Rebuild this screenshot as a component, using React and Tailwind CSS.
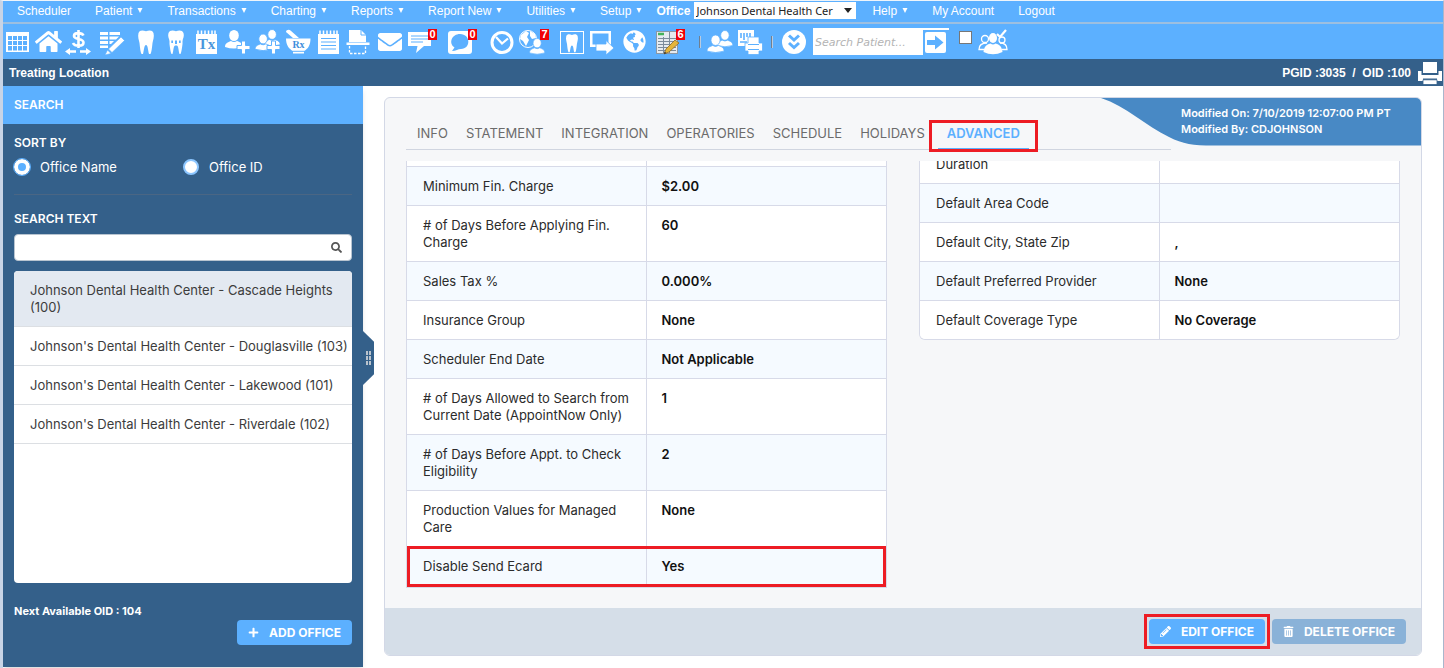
import { useState } from "react";
import { FaPencilAlt, FaPlus, FaTrashAlt, FaSearch, FaEnvelope, FaHome, FaGlobeAmericas } from "react-icons/fa";

const MENU = [
  { label: "Scheduler" },
  { label: "Patient", arrow: true },
  { label: "Transactions", arrow: true },
  { label: "Charting", arrow: true },
  { label: "Reports", arrow: true },
  { label: "Report New", arrow: true },
  { label: "Utilities", arrow: true },
  { label: "Setup", arrow: true },
];

const MENU_RIGHT = [
  { label: "Help", arrow: true },
  { label: "My Account" },
  { label: "Logout" },
];

const OFFICES = [
  { id: 100, name: "Johnson Dental Health Center - Cascade Heights" },
  { id: 103, name: "Johnson's Dental Health Center - Douglasville" },
  { id: 101, name: "Johnson's Dental Health Center - Lakewood" },
  { id: 102, name: "Johnson's Dental Health Center - Riverdale" },
];

const TABS = ["INFO", "STATEMENT", "INTEGRATION", "OPERATORIES", "SCHEDULE", "HOLIDAYS", "ADVANCED"];

const FINANCE_ROWS = [
  { label: "Minimum Fin. Charge", value: "$2.00" },
  { label: "# of Days Before Applying Fin. Charge", value: "60" },
  { label: "Sales Tax %", value: "0.000%" },
  { label: "Insurance Group", value: "None" },
  { label: "Scheduler End Date", value: "Not Applicable" },
  { label: "# of Days Allowed to Search from Current Date (AppointNow Only)", value: "1" },
  { label: "# of Days Before Appt. to Check Eligibility", value: "2" },
  { label: "Production Values for Managed Care", value: "None" },
  { label: "Disable Send Ecard", value: "Yes", marked: true },
];

const DEFAULT_ROWS = [
  { label: "Duration", value: "" },
  { label: "Default Area Code", value: "" },
  { label: "Default City, State Zip", value: "," },
  { label: "Default Preferred Provider", value: "None" },
  { label: "Default Coverage Type", value: "No Coverage" },
];

/* ---------- toolbar icons, all on a 26x26 grid ---------- */

const Svg = ({ children }) => (
  <svg viewBox="0 0 26 26" className="size-[26px]" fill="#fff" aria-hidden="true">
    {children}
  </svg>
);

const TOOTH = "M1 3C2 0 5 0 8.500 1.200C12 0 15 0 16 3C17 7 15.500 10 15 13C14.500 18 14 22 13 24H11.500C10.500 21 10.500 15 8.500 15C6.500 15 6.500 21 5.500 24H4C3 22 2.500 18 2 13C1.500 10 0 7 1 3Z";

const CalendarIcon = () => (
  <Svg>
    <path fillRule="evenodd" d="M1 3H24V23H1ZM3 7V21.500H22V7Z" />
    <path d="M3 11.500H22M3 16.500H22M7.500 7V22M12.500 7V22M17.500 7V22" stroke="#fff" fill="none" />
  </Svg>
);

const DollarIcon = () => (
  <Svg>
    <path d="M18.500 6.500C17 3.500 9 3 9 7C9 11 18.500 9 18.500 13.500C18.500 18 9.500 17.500 8 14M13.500 1V19" fill="none" stroke="#fff" strokeWidth="2.600" />
    <path d="M0 22.500L5 19V21.200H11V23.800H5V26ZM26 22.500L21 19V21.200H15V23.800H21V26Z" />
  </Svg>
);

const NoteEditIcon = () => (
  <Svg>
    <path d="M1 3h8v3H1zM10.500 3H21v3H10.500zM1 7.500h8v3H1zM10.500 7.500H20l-3 3h-6.500zM1 12h8v3H1zM10.500 12H15l-3 3h-1.500zM1 16.500h8V19H1z" />
    <path d="M22 8L25.500 11.500L13 23.500L9.500 20ZM8.500 21L12 24.500L6 26Z" stroke="#5cb0ff" strokeWidth=".6" />
  </Svg>
);

const ToothIcon = () => (
  <Svg>
    <path transform="translate(4.500 1)" d={TOOTH} />
  </Svg>
);

const ImplantIcon = () => (
  <Svg>
    <path d="M5.500 4C6.500 1 10 1 13 2.200C16 1 19.500 1 20.500 4C21.500 7 20 10 19.500 11.500H6.500C6 10 4.500 7 5.500 4Z" />
    <path d="M6.500 11H8.300V14H10V11H12V15H14V11H16V14H17.700V11H19.500V15C19 19 18.500 23 17.500 25H16.500C15.500 22 15.500 17 14 16.500H12C10.500 17 10.500 22 9.500 25H8.500C7.500 23 7 19 6.500 15Z" />
  </Svg>
);

const PadTop = () => (
  <path d="M5 1.500V5M8.500 1.500V5M12 1.500V5M15.500 1.500V5M19 1.500V5M22 1.500V5" stroke="#fff" strokeWidth="1.500" />
);

const TreatmentIcon = () => (
  <Svg>
    <PadTop />
    <path d="M3 5H24V25H3Z" />
    <text x="13.500" y="20" textAnchor="middle" fontSize="15" fontWeight="700" fill="#4a96dc" className="font-['Liberation_Serif',serif]">Tx</text>
  </Svg>
);

const NotepadIcon = () => (
  <Svg>
    <PadTop />
    <path d="M3 5H24V25H3Z" />
    <path d="M6 9.500H21M6 13H21M6 16.500H21M6 20H21" stroke="#5cb0ff" strokeWidth="1.200" />
  </Svg>
);

const Person = ({ transform }) => (
  <g transform={transform}>
    <ellipse cx="9" cy="5.500" rx="4.800" ry="5.500" />
    <path d="M0 17C0 12.500 4 12 6 11Q9 13 12 11C14 12 18 12.500 18 17Q9 20 0 17Z" />
  </g>
);

const PlusMark = () => (
  <path d="M16.500 12h4v4.500H25v4h-4.500V25h-4v-4.500H12v-4h4.500z" stroke="#5cb0ff" strokeWidth="1" />
);

const AddUserIcon = () => (
  <Svg>
    <Person transform="translate(0 1)" />
    <PlusMark />
  </Svg>
);

const AddFamilyIcon = () => (
  <Svg>
    <g stroke="#5cb0ff" strokeWidth="1">
      <Person transform="translate(9 0.500) scale(.9)" />
      <Person transform="translate(0 5) scale(.9)" />
    </g>
    <PlusMark />
  </Svg>
);

const MortarIcon = () => (
  <Svg>
    <path d="M1 3C1 1 4 0 5.500 1.500L14 9H8Z" />
    <path d="M1 9.500H25.500C25.500 16 23 20 19 22V24.500H8V22C4 20 1 16 1 9.500Z" />
    <path d="M8 22.300H19" stroke="#5cb0ff" />
    <text x="13.500" y="19" textAnchor="middle" fontSize="10" fontWeight="700" fill="#3f8fdc" className="font-['Liberation_Serif',serif]">Rx</text>
  </Svg>
);

const ScannerIcon = () => (
  <Svg>
    <path d="M4 1H16L21 6V13H4Z" />
    <path d="M16 1V6H21" fill="none" stroke="#5cb0ff" />
    <path d="M1.500 13.500H24.500V16H1.500Z" />
    <path d="M4.500 17V24.500H20.500V17" fill="none" stroke="#fff" strokeWidth="1.300" strokeDasharray="2.500 1.500" />
  </Svg>
);

const MessageIcon = () => (
  <Svg>
    <path d="M1 3H24V17H17L9 24L10.500 17H1Z" />
    <path d="M4 7H21M4 10H21M4 13H16" stroke="#5cb0ff" strokeWidth="1.200" />
  </Svg>
);

const ChatIcon = () => (
  <Svg>
    <rect x="1" y="2" width="24" height="23" rx="3" />
    <path d="M5 22L7.500 18.500C1 14 5 5 13 5C24 5 24 20 14 20C11 20 9 22 5 22Z" fill="#5cb0ff" />
  </Svg>
);

const ClockIcon = () => (
  <Svg>
    <circle cx="13" cy="13.500" r="10" fill="none" stroke="#fff" strokeWidth="3" />
    <path d="M7 8L13 14.500L19 9.500" fill="none" stroke="#fff" strokeWidth="2.200" />
  </Svg>
);

const WebUserIcon = () => (
  <Svg>
    <circle cx="9" cy="10" r="8.500" fill="none" stroke="#fff" />
    <path d="M2 6L7 2L10 4L8 8L10 11L7 17L4 12L1 10ZM11 2L16 5L17 9L13 10L11 7Z" />
    <g stroke="#5cb0ff" strokeWidth=".8">
      <Person transform="translate(10.500 9.500) scale(.85)" />
    </g>
  </Svg>
);

const ToothChartIcon = () => (
  <Svg>
    <rect x="1.500" y="2.500" width="23" height="22" fill="none" stroke="#fff" />
    <path transform="translate(6.500 5) scale(.76)" d={TOOTH} />
  </Svg>
);

const CheckoutIcon = () => (
  <Svg>
    <path fillRule="evenodd" d="M1 2H22V18H1ZM3.500 4.500V15.500H19.500V4.500Z" />
    <path d="M7 15H17V11.500L25 19L17 26V22H7Z" stroke="#5cb0ff" strokeWidth=".8" />
  </Svg>
);

const LedgerIcon = () => (
  <Svg>
    <rect x="1.500" y="2.500" width="21" height="22" fill="#e6ebf0" stroke="#8b98a5" />
    <path d="M3 5H9" stroke="#43b25a" strokeWidth="2.500" />
    <path d="M3 9.500H21M3 12.500H21M3 15.500H21M3 18.500H21M3 21.500H21M8.500 8V24M14.500 3V24" stroke="#7d8c9b" strokeWidth="1" />
    <path d="M20 11L24 14L14 23L9 25L11 20Z" fill="#e5b53a" stroke="#8a6a2c" strokeWidth=".8" />
    <path d="M9 25L9.700 22.500L11.500 24.300Z" fill="#333" />
  </Svg>
);

const UsersIcon = () => (
  <Svg>
    <g stroke="#5cb0ff" strokeWidth=".8">
      <Person transform="translate(10 1.500) scale(.88)" />
      <Person transform="translate(0 6) scale(.95)" />
    </g>
  </Svg>
);

const ReportPrintIcon = () => (
  <Svg>
    <path d="M1 1H17V17H1Z" />
    <path d="M4 9V4M7 11V4M10 8V4M13 9V4M3 13H10" stroke="#5cb0ff" strokeWidth="1.600" />
    <path d="M11 8H22V14H25.500V22H22V25.500H11V22H8V14H11Z" stroke="#5cb0ff" strokeWidth=".8" />
    <path d="M11 15.500H22M11 20.500H22" stroke="#5cb0ff" strokeWidth="1.200" />
  </Svg>
);

const ExpandIcon = () => (
  <Svg>
    <circle cx="13" cy="13" r="12" />
    <path d="M8 6.500L13 11L18 6.500M8 14L13 18.500L18 14" fill="none" stroke="#5cb0ff" strokeWidth="3" />
  </Svg>
);

const PrinterIcon = () => (
  <Svg>
    <path d="M6 2H20V13H6Z" />
    <path d="M1 11H4.500V15H21.500V11H25V21H20V18.500H6V21H1Z" />
    <path d="M6 19.800H20V24.500H6Z" stroke="#34608a" strokeWidth=".8" />
  </Svg>
);

const TeamCheckIcon = () => (
  <svg viewBox="0 0 30 26" className="h-[26px] w-[30px]" fill="#fff" aria-hidden="true">
    <g fill="none" stroke="#fff" strokeWidth="1.300">
      <circle cx="7" cy="10" r="3.500" />
      <path d="M9 14C4 14 1 16 1 20.500H6M22 14C26 14 29 16 29 20.500H24" />
      <circle cx="24" cy="11" r="3" />
    </g>
    <ellipse cx="15" cy="9" rx="4" ry="5" />
    <path d="M5.500 23C6 16 11 15 12.500 14.500Q15 16.500 17.500 14.500C19 15 24 16 24.500 23Q15 27.500 5.500 23Z" />
    <path d="M19 5L22 8L28 1" fill="none" stroke="#fff" strokeWidth="2.200" />
  </svg>
);

const TOOLS = [
  { name: "Scheduler", icon: <CalendarIcon /> },
  { name: "Home", icon: <FaHome className="size-[27px]" /> },
  { name: "Transactions", icon: <DollarIcon /> },
  { name: "Edit notes", icon: <NoteEditIcon />, space: "ml-1" },
  { name: "Tooth", icon: <ToothIcon />, space: "ml-1" },
  { name: "Perio", icon: <ImplantIcon /> },
  { name: "Treatment plan", icon: <TreatmentIcon /> },
  { name: "Add patient", icon: <AddUserIcon />, space: "ml-0.5" },
  { name: "Add family", icon: <AddFamilyIcon /> },
  { name: "Prescriptions", icon: <MortarIcon /> },
  { name: "Notes", icon: <NotepadIcon /> },
  { name: "Scan", icon: <ScannerIcon /> },
  { name: "Mail", icon: <FaEnvelope className="size-6" />, space: "ml-0.5" },
  { name: "Messages", icon: <MessageIcon />, badge: "0" },
  { name: "Chat", icon: <ChatIcon />, badge: "0", space: "ml-2.5" },
  { name: "Time clock", icon: <ClockIcon />, space: "ml-3" },
  { name: "Web requests", icon: <WebUserIcon />, badge: "7" },
  { name: "Tooth chart", icon: <ToothChartIcon />, space: "ml-2.5" },
  { name: "Check out", icon: <CheckoutIcon /> },
  { name: "Web", icon: <FaGlobeAmericas className="size-[23px]" />, space: "ml-0.5" },
  { name: "Ledger", icon: <LedgerIcon />, badge: "6", space: "ml-1" },
];

const ToolButton = ({ name, icon, badge, space = "" }) => (
  <button
    type="button"
    aria-label={name}
    className={`relative flex h-[26px] w-[30px] shrink-0 items-center justify-center text-white ${space}`}
  >
    {icon}
    {badge && (
      <span className="absolute -right-0.5 top-0 h-[11px] w-[9px] bg-[#f00008] text-center text-[11px]/[11px] font-bold">
        {badge}
      </span>
    )}
  </button>
);

const Separator = ({ space }) => <span className={`h-3 w-0.5 shrink-0 border-l border-[#6f7f90] bg-[#b9cbe0] ${space}`} />;

const MenuLink = ({ label, arrow }) => (
  <a href="#" className="flex shrink-0 items-center gap-[5px] px-3">
    {label}
    {arrow && (
      <svg viewBox="0 0 6 5" className="h-[5px] w-1.5" fill="#fff" aria-hidden="true">
        <path d="M0.500 0H5.500L3 5Z" />
      </svg>
    )}
  </a>
);

function TopMenu() {
  return (
    <nav className="flex h-[23px] items-center border-b-2 border-[#9dbfe0] bg-[#5cb0ff] pb-0.5 pl-0.5 text-xs text-white">
      {MENU.map((item) => (
        <MenuLink key={item.label} {...item} />
      ))}
      <label htmlFor="office" className="ml-0.5 font-bold">Office</label>
      <div className="relative ml-1 mr-1">
        <select
          id="office"
          className="block h-[17px] w-[162px] appearance-none bg-white pl-0.5 text-[11px]/[17px] text-[#222] font-['Noto_Sans',sans-serif]"
        >
          <option>Johnson Dental Health Cer</option>
        </select>
        <svg viewBox="0 0 8 5" className="pointer-events-none absolute right-1 top-1.5 h-[5px] w-2" aria-hidden="true">
          <path d="M0 0H8L4 5Z" fill="#222" />
        </svg>
      </div>
      {MENU_RIGHT.map((item) => (
        <MenuLink key={item.label} {...item} />
      ))}
    </nav>
  );
}

function Toolbar() {
  return (
    <div className="flex h-[35px] items-center bg-[#5cb0ff]">
      {TOOLS.map((tool) => (
        <ToolButton key={tool.name} {...tool} />
      ))}
      <Separator space="ml-4" />
      <ToolButton name="Patients" icon={<UsersIcon />} space="ml-1" />
      <ToolButton name="Print report" icon={<ReportPrintIcon />} />
      <Separator space="ml-1.5" />
      <ToolButton name="More" icon={<ExpandIcon />} space="ml-1.5" />
      <div className="ml-1 flex h-[27px] w-[136px] shrink-0 items-center bg-white">
        <input
          type="text"
          aria-label="Search Patient"
          placeholder="Search Patient..."
          className="h-full w-[110px] pl-0.5 pt-0.5 text-[11px] italic outline-none placeholder:text-[#b3b3b3] font-['DejaVu_Sans',sans-serif]"
        />
        <button type="button" aria-label="Go" className="size-[26px]">
          <svg viewBox="0 0 26 26" className="size-[26px]" aria-hidden="true">
            <path d="M0 1H26V26H0Z" fill="#5cb0ff" />
            <rect x="2" y="3" width="21" height="21" rx="2" fill="#fff" />
            <path d="M4 11H12V6.500L20.500 13.500L12 20.500V16H4Z" fill="#5cb0ff" />
          </svg>
        </button>
      </div>
      <input
        type="checkbox"
        aria-label="All offices"
        className="mb-2 ml-2.5 size-[13px] shrink-0 appearance-none border border-[#777] bg-white checked:bg-[#34608a]"
      />
      <button type="button" aria-label="Team" className="ml-1.5 shrink-0">
        <TeamCheckIcon />
      </button>
    </div>
  );
}

function Sidebar() {
  const [sortBy, setSortBy] = useState("name");
  const [selected, setSelected] = useState(100);

  const radioClass =
    "size-4 appearance-none rounded-full border-2 border-[#8cc6ff] bg-white checked:border-4 checked:border-white checked:bg-[#5cb0ff] checked:outline checked:outline-[#5cb0ff]";

  return (
    <aside className="relative mb-px flex w-[360px] shrink-0 flex-col bg-[#34608a] text-white shadow-md">
      <h2 className="bg-[#5cb0ff] px-[11px] py-[11px] text-xs/4 font-semibold">SEARCH</h2>
      <div className="flex min-h-0 flex-1 flex-col px-[11px] pt-[11px] pb-[22px]">
        <fieldset className="border-b border-[#4a6684] pb-[19px]">
          <legend className="text-xs/4 font-semibold">SORT BY</legend>
          <div className="mt-2 grid grid-cols-2 text-[13px]/4">
            <label className="flex items-center gap-2.5">
              <input type="radio" name="sort" className={radioClass} checked={sortBy === "name"} onChange={() => setSortBy("name")} />
              Office Name
            </label>
            <label className="flex items-center gap-2.5">
              <input type="radio" name="sort" className={radioClass} checked={sortBy === "id"} onChange={() => setSortBy("id")} />
              Office ID
            </label>
          </div>
        </fieldset>

        <label htmlFor="search-text" className="mt-4 text-xs/4 font-semibold">SEARCH TEXT</label>
        <div className="relative mt-[7px]">
          <input id="search-text" type="text" className="block h-[27px] w-full rounded-sm border border-[#b8c4d0] bg-white px-2 text-[13px] text-[#333]" />
          <FaSearch className="absolute right-2.5 top-2 size-[11px] text-[#555]" />
        </div>

        <ul className="mt-2.5 min-h-0 flex-1 overflow-hidden rounded bg-white text-[13px]/[17px] text-[#3c3c3c]">
          {OFFICES.map((office) => (
            <li key={office.id} className="border-b border-[#dcdfe3]">
              <button
                type="button"
                onClick={() => setSelected(office.id)}
                className={`block w-full pl-4 pr-1 pt-[11px] pb-2.5 text-left ${office.id === selected ? "bg-[#e3e9f1]" : ""}`}
              >
                {office.name} ({office.id})
              </button>
            </li>
          ))}
        </ul>

        <p className="mt-5 text-[11px]/4 font-bold">Next Available OID : 104</p>
        <button type="button" className="mt-px flex h-[25px] items-center gap-2.5 self-end rounded bg-[#5cb0ff] px-[11px] text-xs font-bold">
          <FaPlus className="size-[11px]" />
          ADD OFFICE
        </button>
      </div>

      {/* collapse handle */}
      <button
        type="button"
        aria-label="Collapse search"
        className="absolute left-full top-[245px] flex h-[54px] w-[11px] items-center justify-center bg-[#34608a] [clip-path:polygon(0_0,100%_20%,100%_80%,0_100%)]"
      >
        <svg viewBox="0 0 5 14" className="h-3.5 w-[5px]" fill="#b9c3cd" aria-hidden="true">
          <path d="M0 0h2v4H0zM3 0h2v4H3zM0 5h2v4H0zM3 5h2v4H3zM0 10h2v4H0zM3 10h2v4H3z" />
        </svg>
      </button>
    </aside>
  );
}

const SettingsTable = ({ rows, children, className = "", startEven }) => (
  <div className={`self-start overflow-hidden border-x border-b border-[#d7dae8] ${className}`}>
    <table className="w-full table-fixed border-separate border-spacing-0 text-left text-[13px]/[17px] text-[#2b2b2b]">
      <tbody>
        {children}
        {rows.map(({ label, value, marked }, i) => (
          <tr
            key={label}
            className={`align-top ${(i % 2 === 0) === startEven ? "bg-[#f5faff]" : "bg-white"} ${marked ? "h-[41px] outline-[3px] -outline-offset-[3px] outline-[#ed1c24]" : ""}`}
          >
            <th scope="row" className="border-t border-r border-[#d7dae8] px-4 pt-[11px] pb-2.5 font-normal">{label}</th>
            <td className="border-t border-[#d7dae8] px-[15px] pt-[11px] pb-2.5 font-semibold text-[#111]">{value}</td>
          </tr>
        ))}
      </tbody>
    </table>
  </div>
);

function OfficePanel() {
  const [tab, setTab] = useState("ADVANCED");

  return (
    <section className="relative flex min-w-0 flex-1 flex-col overflow-hidden rounded-md border border-[#d3d8e6] bg-[#f6f7f9]">
      <div className="absolute right-0 top-0 h-12 w-80 text-[11px]/4 font-semibold text-white">
        <svg viewBox="0 0 320 48" preserveAspectRatio="none" className="absolute inset-0 size-full" aria-hidden="true">
          <path d="M0 0C25 8 45 28 68 39C82 46 92 47.500 112 47.500H320V0Z" fill="#4889c5" />
        </svg>
        <p className="relative pl-20 pt-[7px]">
          Modified On: 7/10/2019 12:07:00 PM PT
          <br />
          Modified By: CDJOHNSON
        </p>
      </div>

      <div role="tablist" className="ml-[21px] mr-[250px] mt-[22px] flex h-[30px] border-b border-[#d0d5e0] pl-0.5 text-[13px]">
        {TABS.map((name) => {
          const active = name === tab;
          return (
            <button
              key={name}
              type="button"
              role="tab"
              aria-selected={active}
              onClick={() => setTab(name)}
              className={`relative h-[30px] shrink-0 px-[9px] pb-0.5 ${active ? "ml-1 border-b-2 border-[#5cb0ff] pt-0.5 font-semibold text-[#5cb0ff]" : "text-[#6b6b6b]"}`}
            >
              {name}
              {active && <span className="absolute -inset-x-[9px] top-0 -bottom-1 border-[3px] border-[#ed1c24]" />}
            </button>
          );
        })}
      </div>

      <div className="mt-[11px] grid min-h-0 flex-1 grid-cols-2 gap-8 overflow-hidden px-[21px]">
        <SettingsTable rows={FINANCE_ROWS} startEven>
          <tr className="bg-white">
            <td className="h-[5px] border-r border-[#d7dae8]" />
            <td />
          </tr>
        </SettingsTable>
        <SettingsTable rows={DEFAULT_ROWS} startEven={false} className="-mt-[17px] rounded-b-md" />
      </div>

      <footer className="flex h-[47px] shrink-0 items-center justify-end gap-[7px] bg-[#d5dee8] px-[15px] text-xs font-bold text-white">
        <div className="relative">
          <button type="button" className="flex h-[25px] items-center gap-2.5 rounded bg-[#5cb0ff] px-[11px]">
            <FaPencilAlt className="size-[11px]" />
            EDIT OFFICE
          </button>
          <span className="pointer-events-none absolute -inset-x-[5px] -inset-y-[5px] border-[3px] border-[#ed1c24]" />
        </div>
        <button type="button" className="flex h-[25px] items-center gap-2.5 rounded bg-[#8ab2d8] px-[11px]">
          <FaTrashAlt className="size-[11px]" />
          DELETE OFFICE
        </button>
      </footer>
    </section>
  );
}

export default function App() {
  return (
    <div className="flex h-screen flex-col overflow-hidden border-l-[3px] border-r border-t border-l-[#c8d4e6] border-r-[#a9b6cc] border-t-[#eef4fa] bg-white font-['Liberation_Sans',Arial,sans-serif]">
      <TopMenu />
      <Toolbar />
      <header className="flex h-[27px] shrink-0 items-center justify-between bg-[#34608a] pl-1.5 text-xs font-bold text-white">
        <h1>Treating Location</h1>
        <div className="flex items-center gap-1.5">
          <span className="whitespace-pre">PGID :3035  /  OID :100</span>
          <button type="button" aria-label="Print">
            <PrinterIcon />
          </button>
        </div>
      </header>
      <main className="flex min-h-0 flex-1 font-['Inter',sans-serif]">
        <Sidebar />
        <div className="flex min-w-0 flex-1 px-[21px] pb-3 pt-[11px]">
          <OfficePanel />
        </div>
      </main>
    </div>
  );
}
